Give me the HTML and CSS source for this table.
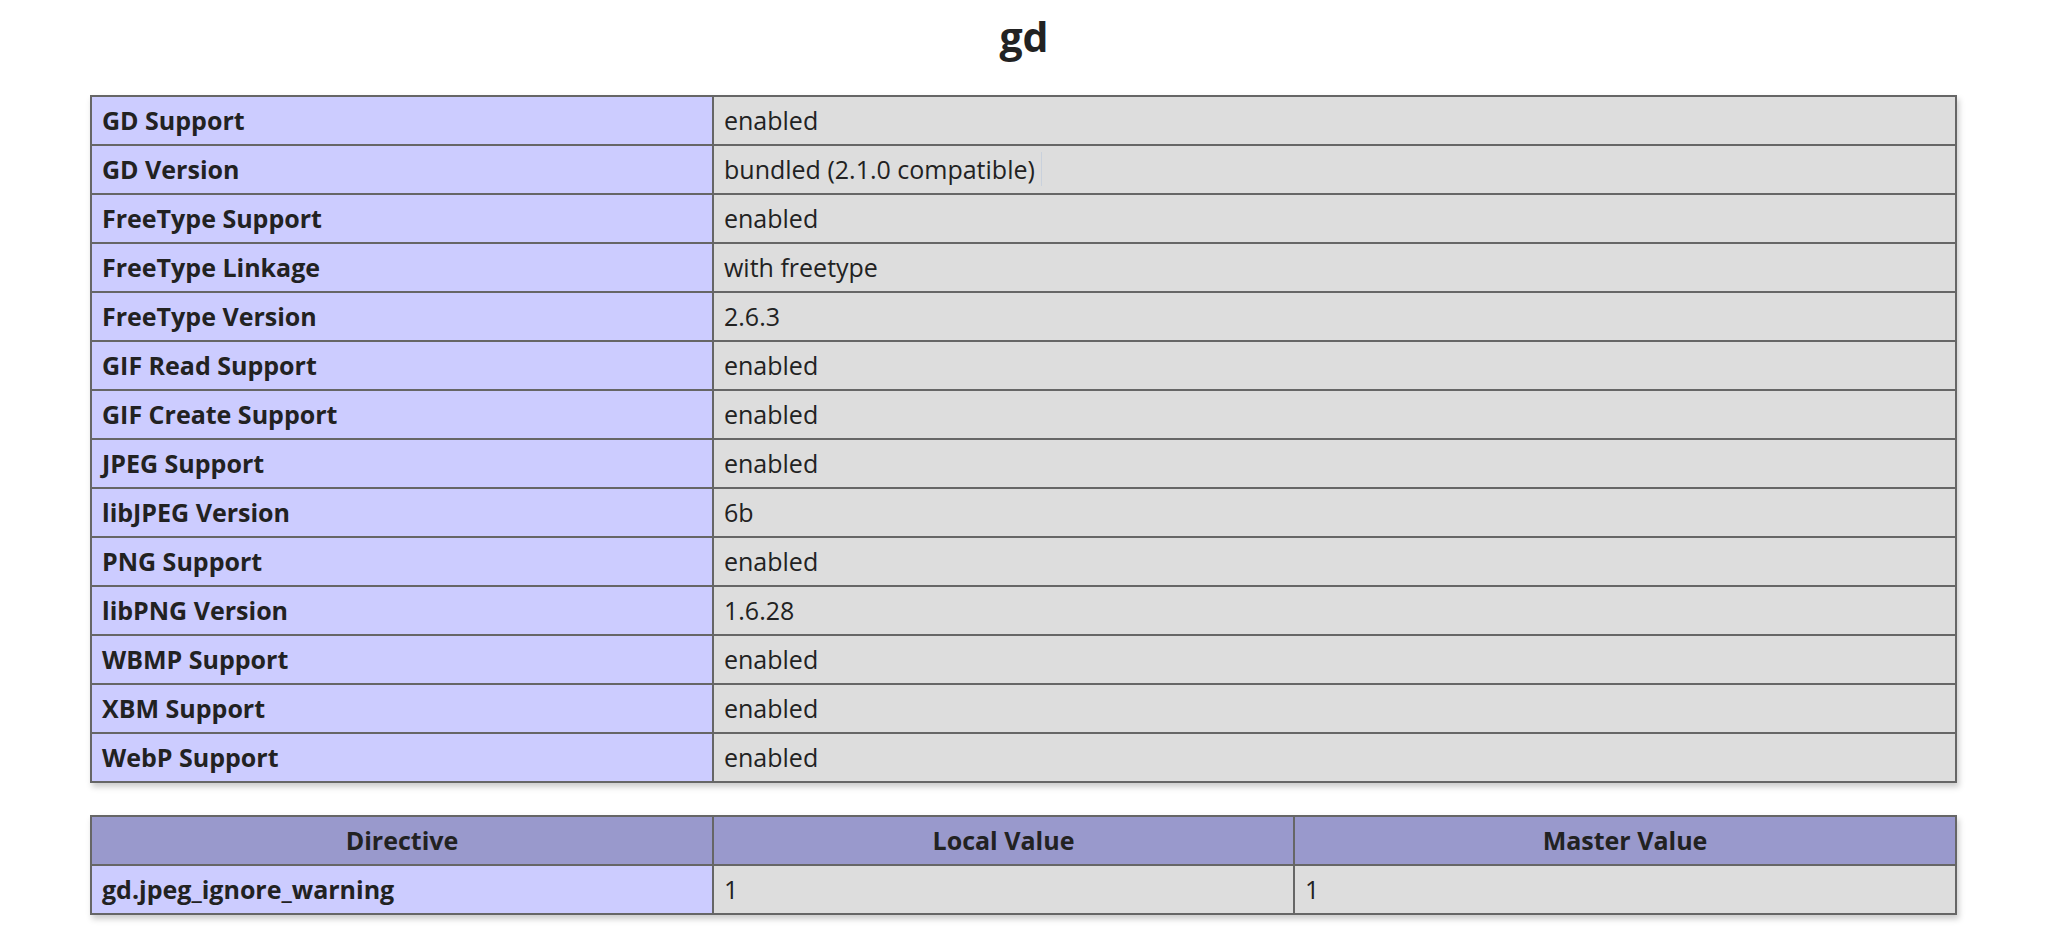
FILE: index.html
```html
<!DOCTYPE html>
<html>
<head>
<meta charset="utf-8">
<title>gd</title>
<link rel="stylesheet" href="styles.css">
</head>
<body>
<div class="page">
  <h2 class="title">gd</h2>
  <table class="info">
    <tbody>
      <tr><td class="e">GD Support</td><td class="v">enabled</td></tr>
      <tr><td class="e">GD Version</td><td class="v"><span class="caret">bundled (2.1.0 compatible)</span></td></tr>
      <tr><td class="e">FreeType Support</td><td class="v">enabled</td></tr>
      <tr><td class="e">FreeType Linkage</td><td class="v">with freetype</td></tr>
      <tr><td class="e">FreeType Version</td><td class="v">2.6.3</td></tr>
      <tr><td class="e">GIF Read Support</td><td class="v">enabled</td></tr>
      <tr><td class="e">GIF Create Support</td><td class="v">enabled</td></tr>
      <tr><td class="e">JPEG Support</td><td class="v">enabled</td></tr>
      <tr><td class="e">libJPEG Version</td><td class="v">6b</td></tr>
      <tr><td class="e">PNG Support</td><td class="v">enabled</td></tr>
      <tr><td class="e">libPNG Version</td><td class="v">1.6.28</td></tr>
      <tr><td class="e">WBMP Support</td><td class="v">enabled</td></tr>
      <tr><td class="e">XBM Support</td><td class="v">enabled</td></tr>
      <tr><td class="e">WebP Support</td><td class="v">enabled</td></tr>
    </tbody>
  </table>
  <table class="info">
    <tbody>
      <tr class="h"><th class="col-e">Directive</th><th class="col-local">Local Value</th><th>Master Value</th></tr>
      <tr><td class="e">gd.jpeg_ignore_warning</td><td class="v">1</td><td class="v">1</td></tr>
    </tbody>
  </table>
</div>
</body>
</html>
```

FILE: styles.css
```css
html, body {
  margin: 0;
  padding: 0;
  background: #fff;
}
body {
  font-family: "Open Sans", "Noto Sans", sans-serif;
  color: #222;
}
.page {
  padding: 0 104px 0 90px;
}
.title {
  margin: 0;
  padding-top: 11px;
  height: 95px;
  box-sizing: border-box;
  text-align: center;
  font-size: 41px;
  line-height: 50px;
  font-weight: bold;
}
.info {
  border-collapse: collapse;
  width: 1867px;
  margin: 0 0 32px 0;
  box-shadow: 2px 4px 6px #ccc;
}
.info td, .info th {
  border: 2px solid #666;
  font-size: 25px;
  line-height: 31px;
  height: 31px;
  padding: 8px 10px;
  vertical-align: baseline;
  text-align: left;
}
.e {
  background: #ccf;
  width: 600px;
  font-weight: bold;
}
.v {
  background: #ddd;
}
.h th {
  background: #99c;
  font-weight: bold;
  text-align: center;
}
.col-e { width: 600px; }
.col-local { width: 559px; }
.caret {
  padding-right: 6px;
  border-right: 1px solid #c9d1dc;
}
```
